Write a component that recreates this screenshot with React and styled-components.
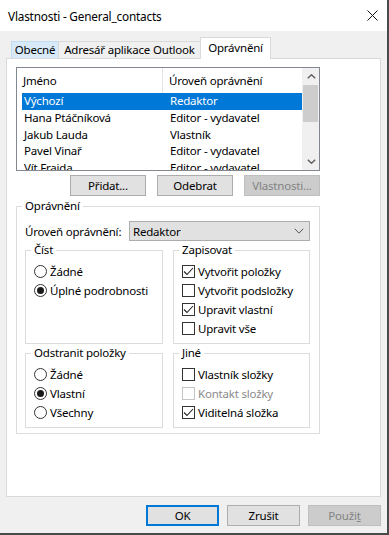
import React from 'react';
import styled, { createGlobalStyle } from 'styled-components';

const GlobalStyle = createGlobalStyle`
  html, body { margin: 0; padding: 0; background: #f0f0f0; }
  body {
    font-family: "Noto Sans", "Open Sans", sans-serif;
    font-size: 11.5px;
    color: #000;
  }
  * { box-sizing: border-box; }
`;

const Window = styled.div`
  width: 389px;
  height: 535px;
  display: flex;
  flex-direction: column;
  background: #f0f0f0;
  border-right: 2px solid #4a4a4a;
  border-bottom: 2px solid #4a4a4a;
  overflow: hidden;
`;

const TitleBar = styled.div`
  height: 31px;
  flex: none;
  background: #fff;
  display: flex;
  align-items: center;
  justify-content: space-between;
  padding: 0 9px 0 8px;
`;

const Title = styled.span`
  font-size: 11.8px;
  line-height: 16px;
  letter-spacing: -0.2px;
`;

const Body = styled.div`
  flex: 1;
  display: flex;
  flex-direction: column;
  padding: 6px 6px 0 6px;
`;

const TabRow = styled.div`
  height: 21px;
  flex: none;
  display: flex;
  align-items: flex-end;
  padding-left: 5px;
  position: relative;
  z-index: 1;
`;

const Tab = styled.div`
  width: ${p => p.$w}px;
  height: ${p => (p.$active ? 22 : 17)}px;
  margin-bottom: ${p => (p.$active ? -1 : 0)}px;
  margin-left: ${p => (p.$first ? 0 : -1)}px;
  display: flex;
  align-items: center;
  justify-content: center;
  padding-bottom: ${p => (p.$active ? 2 : 0)}px;
  line-height: 16px;
  letter-spacing: -0.2px;
  white-space: nowrap;
  border: 1px solid ${p => (p.$hover ? '#c0dcf3' : '#d9d9d9')};
  border-bottom: ${p => (p.$active ? 'none' : '0')};
  background: ${p => (p.$active ? '#fff' : p.$hover ? '#d8eaf9' : '#f0f0f0')};
  position: relative;
  z-index: ${p => (p.$active ? 2 : 1)};
`;

const Panel = styled.div`
  height: 439px;
  flex: none;
  background: #fff;
  border: 1px solid #d9d9d9;
  padding: 8px 0 0 9px;
  display: flex;
  flex-direction: column;
`;

const Column = styled.div`
  width: 304px;
  display: flex;
  flex-direction: column;
`;

const ListBox = styled.div`
  height: 104px;
  border: 1px solid #828790;
  display: flex;
  background: #fff;
`;

const ListMain = styled.div`
  flex: 1;
  overflow: hidden;
  display: flex;
  flex-direction: column;
`;

const HeaderRow = styled.div`
  height: 25px;
  flex: none;
  display: grid;
  grid-template-columns: 146px 1fr;
`;

const HeaderCell = styled.div`
  padding: 5px 0 0 6px;
  line-height: 16px;
  letter-spacing: -0.2px;
  white-space: nowrap;
  border-right: ${p => (p.$divider ? '1px solid #e5e5e5' : 'none')};
`;

const Rows = styled.div`
  padding-left: 5px;
`;

const Row = styled.div`
  height: 16.67px;
  display: grid;
  grid-template-columns: 148px 1fr;
  align-items: center;
  line-height: 16px;
  letter-spacing: -0.2px;
  white-space: nowrap;
  background: ${p => (p.$selected ? '#0078d7' : 'transparent')};
  color: ${p => (p.$selected ? '#fff' : '#000')};
`;

const Cell = styled.div`
  padding-left: ${p => (p.$first ? 2 : 0)}px;
  overflow: hidden;
`;

const ScrollBar = styled.div`
  width: 17px;
  flex: none;
  background: #f0f0f0;
  display: flex;
  flex-direction: column;
`;

const ScrollArrow = styled.div`
  height: 17px;
  flex: none;
  display: flex;
  align-items: center;
  justify-content: center;
  padding-left: 1px;
`;

const ScrollThumb = styled.div`
  height: 37px;
  margin: 0 1px 0 1px;
  background: #cdcdcd;
`;

const ScrollTrack = styled.div`
  flex: 1;
`;

const ButtonRow = styled.div`
  display: flex;
  justify-content: flex-end;
  gap: ${p => p.$gap}px;
  margin-top: ${p => p.$top}px;
`;

const Button = styled.div`
  width: ${p => p.$w}px;
  height: 21px;
  display: flex;
  align-items: center;
  justify-content: center;
  line-height: 16px;
  letter-spacing: -0.2px;
  background: ${p => (p.$disabled ? '#cccccc' : '#e1e1e1')};
  color: ${p => (p.$disabled ? '#838383' : '#000')};
  border: ${p => (p.$default ? '2px solid #0078d7' : p.$disabled ? '1px solid #bfbfbf' : '1px solid #adadad')};
`;

const Group = styled.fieldset`
  margin: ${p => p.$top || 0}px 0 0 0;
  padding: ${p => p.$pad || '0 9px 5px 8px'};
  border: 1px solid #dcdcdc;
  min-width: 0;
  height: ${p => (p.$h ? `${p.$h}px` : 'auto')};
`;

const Legend = styled.legend`
  padding: 0 3px;
  margin-left: -3px;
  line-height: 16px;
  letter-spacing: -0.2px;
`;

const LevelRow = styled.div`
  display: flex;
  align-items: center;
  height: 20px;
  margin-top: 7px;
`;

const LevelLabel = styled.div`
  width: 104px;
  flex: none;
  letter-spacing: -0.2px;
  white-space: nowrap;
`;

const Select = styled.div`
  flex: 1;
  height: 20px;
  background: #e1e1e1;
  border: 1px solid #adadad;
  display: flex;
  align-items: center;
  justify-content: space-between;
  padding: 0 5px 0 3px;
  letter-spacing: -0.2px;
`;

const GroupGrid = styled.div`
  display: grid;
  grid-template-columns: 138px 137px;
  column-gap: 10px;
  row-gap: 1px;
  margin-top: 1px;
`;

const Options = styled.div`
  display: flex;
  flex-direction: column;
  padding-top: 4px;
`;

const Option = styled.div`
  height: 19px;
  display: flex;
  align-items: center;
  gap: 3px;
  line-height: 16px;
  letter-spacing: -0.2px;
  white-space: nowrap;
  color: ${p => (p.$disabled ? '#8a8a8a' : '#000')};
`;

const RadioCircle = styled.span`
  width: 13px;
  height: 13px;
  flex: none;
  border-radius: 50%;
  border: 1px solid #333;
  background: #fff;
  display: flex;
  align-items: center;
  justify-content: center;
  &::after {
    content: '';
    width: 7px;
    height: 7px;
    border-radius: 50%;
    background: #1a1a1a;
    display: ${p => (p.$checked ? 'block' : 'none')};
  }
`;

const CheckBox = styled.span`
  width: 13px;
  height: 13px;
  flex: none;
  border: 1px solid ${p => (p.$disabled ? '#c4c4c4' : '#333')};
  background: #fff;
  display: flex;
  align-items: center;
  justify-content: center;
`;

const Radio = ({ checked, children }) => (
  <Option>
    <RadioCircle $checked={checked} />
    <span>{children}</span>
  </Option>
);

const Check = ({ checked, disabled, children }) => (
  <Option $disabled={disabled}>
    <CheckBox $disabled={disabled}>
      {checked && (
        <svg width="11" height="11" viewBox="0 0 11 11">
          <polyline points="1,5.5 4,8.5 10,2" fill="none" stroke="#222" strokeWidth="1.1" />
        </svg>
      )}
    </CheckBox>
    <span>{children}</span>
  </Option>
);

const Chevron = ({ up, color = '#606060', w = 9, h = 5, sw = 1.5 }) => (
  <svg width={w} height={h} viewBox={`0 0 ${w} ${h}`}>
    <polyline
      points={up ? `0.8,${h - 0.8} ${w / 2},0.8 ${w - 0.8},${h - 0.8}` : `0.8,0.8 ${w / 2},${h - 0.8} ${w - 0.8},0.8`}
      fill="none"
      stroke={color}
      strokeWidth={sw}
    />
  </svg>
);

const people = [
  ['Výchozí', 'Redaktor', true],
  ['Hana Ptáčníková', 'Editor - vydavatel'],
  ['Jakub Lauda', 'Vlastník'],
  ['Pavel Vinař', 'Editor - vydavatel'],
  ['Vít Frajda', 'Editor - vydavatel'],
];

export default function App() {
  return (
    <>
      <GlobalStyle />
      <Window>
        <TitleBar>
          <Title>Vlastnosti - General_contacts</Title>
          <svg width="11" height="11" viewBox="0 0 11 11">
            <path d="M0.5 0.5 L10.5 10.5 M10.5 0.5 L0.5 10.5" stroke="#111" strokeWidth="1" />
          </svg>
        </TitleBar>
        <Body>
          <TabRow>
            <Tab $first $hover $w={48}>Obecné</Tab>
            <Tab $w={143}>Adresář aplikace Outlook</Tab>
            <Tab $active $w={71}>Oprávnění</Tab>
          </TabRow>
          <Panel>
            <Column>
              <ListBox>
                <ListMain>
                  <HeaderRow>
                    <HeaderCell $divider>Jméno</HeaderCell>
                    <HeaderCell>Úroveň oprávnění</HeaderCell>
                  </HeaderRow>
                  <Rows>
                    {people.map(([name, level, sel]) => (
                      <Row key={name} $selected={sel}>
                        <Cell $first>{name}</Cell>
                        <Cell>{level}</Cell>
                      </Row>
                    ))}
                  </Rows>
                </ListMain>
                <ScrollBar>
                  <ScrollArrow><Chevron up /></ScrollArrow>
                  <ScrollThumb />
                  <ScrollTrack />
                  <ScrollArrow><Chevron /></ScrollArrow>
                </ScrollBar>
              </ListBox>
              <ButtonRow $gap={11} $top={4}>
                <Button $w={76}>Přidat...</Button>
                <Button $w={76}>Odebrat</Button>
                <Button $w={76} $disabled>Vlastnosti...</Button>
              </ButtonRow>
              <Group $top={2}>
                <Legend>Oprávnění</Legend>
                <LevelRow>
                  <LevelLabel>Úroveň oprávnění:</LevelLabel>
                  <Select>
                    <span>Redaktor</span>
                    <Chevron color="#555" w={10} h={6} sw={1} />
                  </Select>
                </LevelRow>
                <GroupGrid>
                  <Group $h={102} $pad="0 4px 0 8px">
                    <Legend>Číst</Legend>
                    <Options>
                      <Radio>Žádné</Radio>
                      <Radio checked>Úplné podrobnosti</Radio>
                    </Options>
                  </Group>
                  <Group $h={102} $pad="0 4px 0 8px">
                    <Legend>Zapisovat</Legend>
                    <Options>
                      <Check checked>Vytvořit položky</Check>
                      <Check>Vytvořit podsložky</Check>
                      <Check checked>Upravit vlastní</Check>
                      <Check>Upravit vše</Check>
                    </Options>
                  </Group>
                  <Group $h={83} $pad="0 4px 0 8px">
                    <Legend>Odstranit položky</Legend>
                    <Options>
                      <Radio>Žádné</Radio>
                      <Radio checked>Vlastní</Radio>
                      <Radio>Všechny</Radio>
                    </Options>
                  </Group>
                  <Group $h={83} $pad="0 4px 0 8px">
                    <Legend>Jiné</Legend>
                    <Options>
                      <Check>Vlastník složky</Check>
                      <Check disabled>Kontakt složky</Check>
                      <Check checked>Viditelná složka</Check>
                    </Options>
                  </Group>
                </GroupGrid>
              </Group>
            </Column>
          </Panel>
          <ButtonRow $gap={8} $top={8}>
            <Button $w={73} $default>OK</Button>
            <Button $w={73}>Zrušit</Button>
            <Button $w={73} $disabled>Použi<u>t</u></Button>
          </ButtonRow>
        </Body>
      </Window>
    </>
  );
}
